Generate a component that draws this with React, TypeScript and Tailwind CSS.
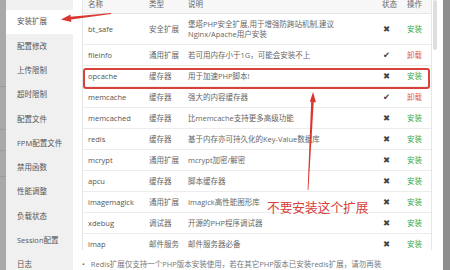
import React from "react";

type Row = {
  name: string;
  type: string;
  desc: string[];
  installed: boolean;
};

const rows: Row[] = [
  { name: "bt_safe", type: "安全扩展", desc: ["堡塔PHP安全扩展,用于增强防跨站机制,建议", "Nginx/Apache用户安装"], installed: false },
  { name: "fileinfo", type: "通用扩展", desc: ["若可用内存小于1G，可能会安装不上"], installed: true },
  { name: "opcache", type: "缓存器", desc: ["用于加速PHP脚本!"], installed: false },
  { name: "memcache", type: "缓存器", desc: ["强大的内容缓存器"], installed: true },
  { name: "memcached", type: "缓存器", desc: ["比memcache支持更多高级功能"], installed: false },
  { name: "redis", type: "缓存器", desc: ["基于内存亦可持久化的Key-Value数据库"], installed: false },
  { name: "mcrypt", type: "通用扩展", desc: ["mcrypt加密/解密"], installed: false },
  { name: "apcu", type: "缓存器", desc: ["脚本缓存器"], installed: false },
  { name: "imagemagick", type: "通用扩展", desc: ["Imagick高性能图形库"], installed: false },
  { name: "xdebug", type: "调试器", desc: ["开源的PHP程序调试器"], installed: false },
  { name: "imap", type: "邮件服务", desc: ["邮件服务器必备"], installed: false },
];

const menu = [
  "安装扩展",
  "配置修改",
  "上传限制",
  "超时限制",
  "配置文件",
  "FPM配置文件",
  "禁用函数",
  "性能调整",
  "负载状态",
  "Session配置",
  "日志",
];

const font = { fontFamily: '"Open Sans", "Noto Sans CJK SC", sans-serif' };

export default function App() {
  return (
    <div
      className="relative flex h-[270px] w-[450px] overflow-hidden bg-white"
      style={font}
    >
      {/* dimmed page strip on the left */}
      <div className="flex w-[6px] shrink-0 flex-col bg-[#a9a9a9]">
        <div className="mt-[86px] h-px bg-[#9a9a9a]" />
        <div className="mt-[42px] h-px bg-[#9c9c9c]" />
        <div className="mt-[20px] h-px bg-[#9c9c9c]" />
        <div className="mt-[25px] h-px bg-[#9c9c9c]" />
      </div>

      {/* sidebar */}
      <aside className="flex w-[67px] shrink-0 flex-col bg-[#f0f0f0] pt-[10px]">
        {menu.map((m, i) => (
          <div
            key={m}
            className={`flex h-[24.3px] shrink-0 items-center pl-[11px] text-[7.5px] leading-none text-[#555] ${
              i === 0 ? "bg-white" : ""
            }`}
          >
            {m}
          </div>
        ))}
      </aside>

      {/* main */}
      <main className="flex min-w-0 flex-1 flex-col pl-[9px] pr-[5px]">
        <div className="flex h-[250px] shrink-0 overflow-hidden">
          <div className="-mt-[6px] flex w-[350px] shrink-0 flex-col border-x border-[#e6e6e6] text-[7.5px] leading-[10px]">
            <div className="grid h-[20px] shrink-0 grid-cols-[61px_39px_194px_24px_32px] items-center border-b border-[#e6e6e6] bg-[#f7f7f7] text-[#666]">
              <div className="pl-[5px]">名称</div>
              <div className="pl-[5px]">类型</div>
              <div className="pl-[5px]">说明</div>
              <div className="pl-[5px]">状态</div>
              <div className="pl-[6px]">操作</div>
            </div>
            {rows.map((r) => (
              <div
                key={r.name}
                className={`grid shrink-0 grid-cols-[61px_39px_194px_24px_32px] items-center border-b border-[#ececec] text-[#666] ${
                  r.desc.length > 1 ? "h-[31px]" : "h-[21px]"
                }`}
              >
                <div className="pl-[5px] text-[#555]">{r.name}</div>
                <div className="pl-[5px]">{r.type}</div>
                <div className="pl-[5px]">
                  {r.desc.map((d) => (
                    <div key={d} className="whitespace-nowrap">
                      {d}
                    </div>
                  ))}
                </div>
                <div
                  className="pl-[6px] text-[8.5px] text-[#444]"
                  style={{ fontFamily: '"DejaVu Sans", sans-serif' }}
                >
                  {r.installed ? "✔" : "✖"}
                </div>
                <div
                  className={`pl-[6px] ${
                    r.installed ? "text-[#e05a55]" : "text-[#2fa84a]"
                  }`}
                >
                  {r.installed ? "卸载" : "安装"}
                </div>
              </div>
            ))}
          </div>
          <div className="flex w-[6px] shrink-0 justify-center">
            <div className="h-[50px] w-[4px] rounded-sm bg-[#dedede]" />
          </div>
        </div>
        <div className="flex items-start gap-[6px] whitespace-nowrap pt-[9px] text-[7.5px] leading-[10px] text-[#777]">
          <span className="text-[#666]">•</span>
          <span>Redis扩展仅支持一个PHP版本安装使用，若在其它PHP版本已安装redis扩展，请勿再装</span>
        </div>
      </main>

      {/* dimmed page strip on the right */}
      <div className="w-[7px] shrink-0 bg-[#8e8e8e]" />

      {/* annotations */}
      <div className="pointer-events-none absolute left-[83px] top-[67.5px] h-[21px] w-[347px] rounded-[3px] border-2 border-[#d8423b]" />
      <svg
        className="pointer-events-none absolute left-0 top-0"
        width="450"
        height="270"
        viewBox="0 0 450 270"
      >
        <polygon
          points="111,13 111,14 71,19.4 70.6,16.8"
          fill="#d8362f"
        />
        <polygon points="61,19.5 70.5,14.6 71.4,22" fill="#d8362f" />
        <polygon
          points="311.2,101 313.8,101 308.4,190 307.6,190"
          fill="#d8362f"
        />
        <polygon points="313,92 316,102.2 309.8,101.8" fill="#d8362f" />
      </svg>
      <div
        className="pointer-events-none absolute left-[267px] top-[201px] whitespace-nowrap text-[12.7px] leading-none text-[#d6413a]"
        style={{ fontFamily: '"Noto Sans CJK SC", sans-serif' }}
      >
        不要安装这个扩展
      </div>
    </div>
  );
}
